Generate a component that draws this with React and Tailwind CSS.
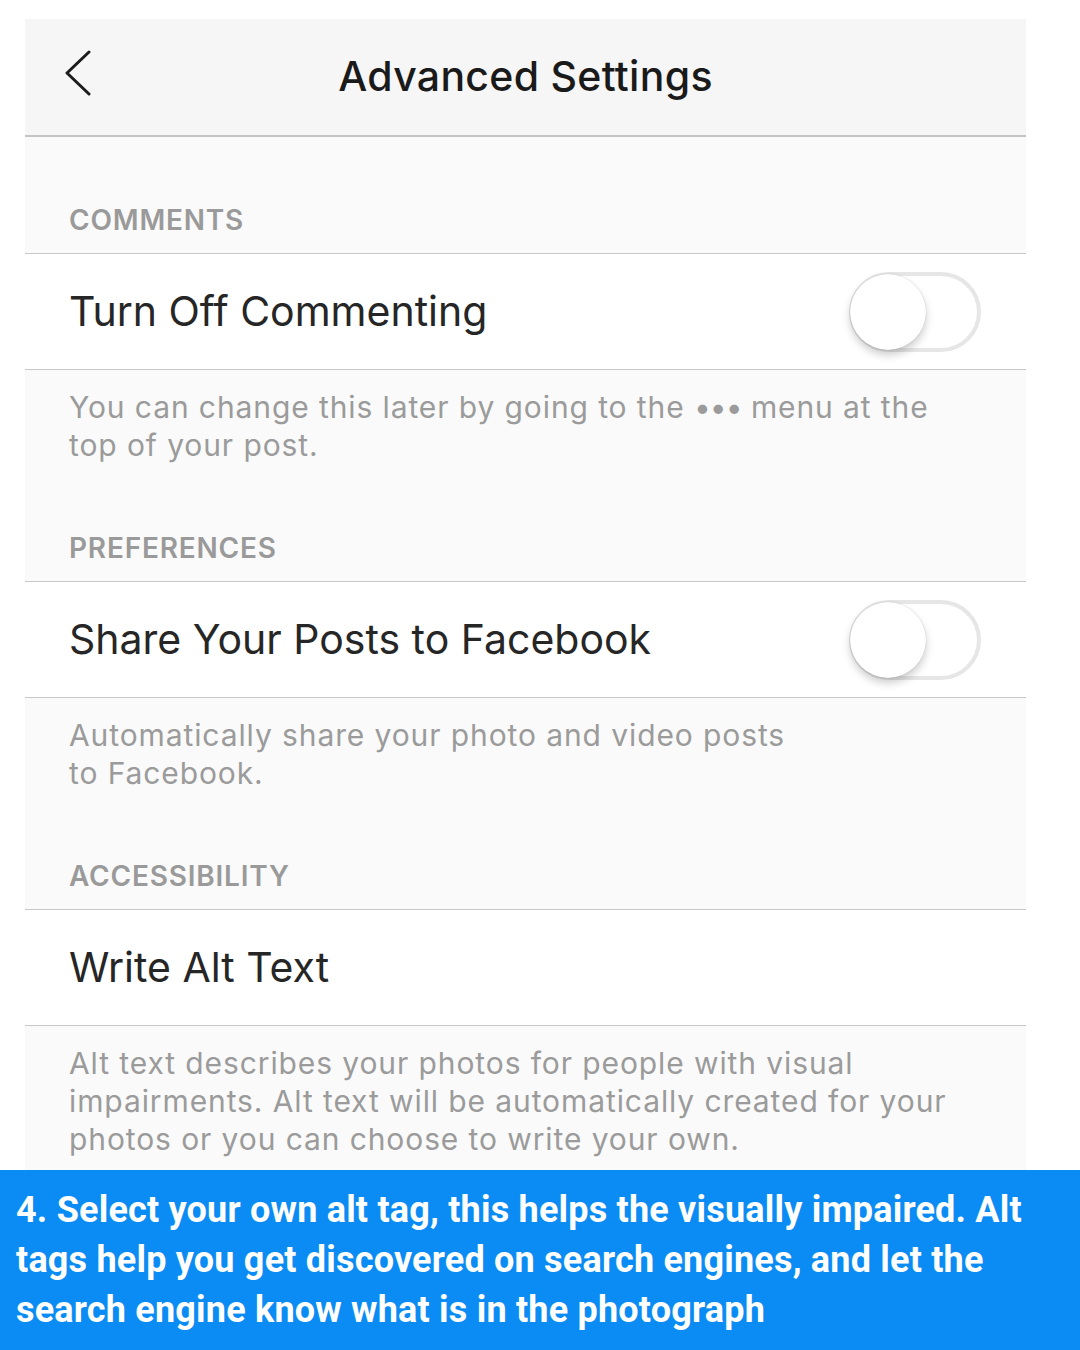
const sans = { fontFamily: 'Inter, Roboto, "Noto Sans", sans-serif' }

function BackChevron() {
  return (
    <svg viewBox="0 0 26 46" className="absolute left-[40px] top-[31px] w-[26px] h-[46px]" fill="none">
      <polyline points="24,2 2,23 24,44" stroke="#1c1c1c" strokeWidth="3" strokeLinecap="round" strokeLinejoin="round" />
    </svg>
  )
}

function Toggle() {
  return (
    <div className="relative w-[132px] h-[80px] rounded-full border-[4px] border-[#e6e6e6] bg-white">
      <div className="absolute -left-[3px] -top-[2px] w-[76px] h-[76px] rounded-full bg-white shadow-[0_5px_9px_rgba(0,0,0,0.2),0_0_1px_rgba(0,0,0,0.25)]" />
    </div>
  )
}

function SectionHeader({ children }) {
  return (
    <div className="h-[70px] flex items-center pt-[3px] px-[44px] border-b border-[#c8c8c8]">
      <span className="text-[28px] font-semibold tracking-[0.8px] text-[#9a9a9a]">{children}</span>
    </div>
  )
}

function Row({ label, toggle }) {
  return (
    <div className="h-[116px] flex items-center justify-between pl-[44px] pr-[45px] bg-white border-b border-[#c8c8c8]">
      <span className="text-[41px] text-[#262626]">{label}</span>
      {toggle && <Toggle />}
    </div>
  )
}

function Note({ children, className = '' }) {
  return (
    <p className={`px-[44px] pt-[18px] text-[30px] leading-[38px] tracking-[0.9px] text-[#9b9b9b] ${className}`}>
      {children}
    </p>
  )
}

export default function App() {
  return (
    <div className="w-[1080px] h-[1350px] bg-white overflow-hidden flex flex-col">
      <div className="pt-[19px] pl-[25px] flex-1 flex flex-col" style={sans}>
        <div className="w-[1001px] flex-1 flex flex-col bg-[#fafafa]">
          {/* nav bar */}
          <div className="relative h-[118px] flex items-center justify-center bg-[#f6f6f6] border-b-2 border-[#c4c4c4]">
            <BackChevron />
            <h1 className="text-[41px] font-medium text-[#1a1a1a] tracking-[0.3px]">Advanced Settings</h1>
          </div>

          <div className="h-[47px]" />
          <SectionHeader>COMMENTS</SectionHeader>
          <Row label="Turn Off Commenting" toggle />
          <Note className="h-[142px]">
            You can change this later by going to the <span className="tracking-[-1px]">•••</span> menu at the
            <br />
            top of your post.
          </Note>

          <SectionHeader>PREFERENCES</SectionHeader>
          <Row label="Share Your Posts to Facebook" toggle />
          <Note className="h-[142px]">
            Automatically share your photo and video posts
            <br />
            to Facebook.
          </Note>

          <SectionHeader>ACCESSIBILITY</SectionHeader>
          <Row label="Write Alt Text" />
          <Note className="flex-1">
            Alt text describes your photos for people with visual
            <br />
            impairments. Alt text will be automatically created for your
            <br />
            photos or you can choose to write your own.
          </Note>
        </div>
      </div>

      {/* caption banner */}
      <div
        className="h-[180px] shrink-0 bg-[#0b8cf4] px-[16px] pt-[15px] text-white font-bold text-[36px] leading-[50px] tracking-[0.2px] whitespace-nowrap"
        style={{ fontFamily: 'Roboto, "Noto Sans", sans-serif' }}
      >
        4. Select your own alt tag, this helps the visually impaired. Alt
        <br />
        tags help you get discovered on search engines, and let the
        <br />
        search engine know what is in the photograph
      </div>
    </div>
  )
}
